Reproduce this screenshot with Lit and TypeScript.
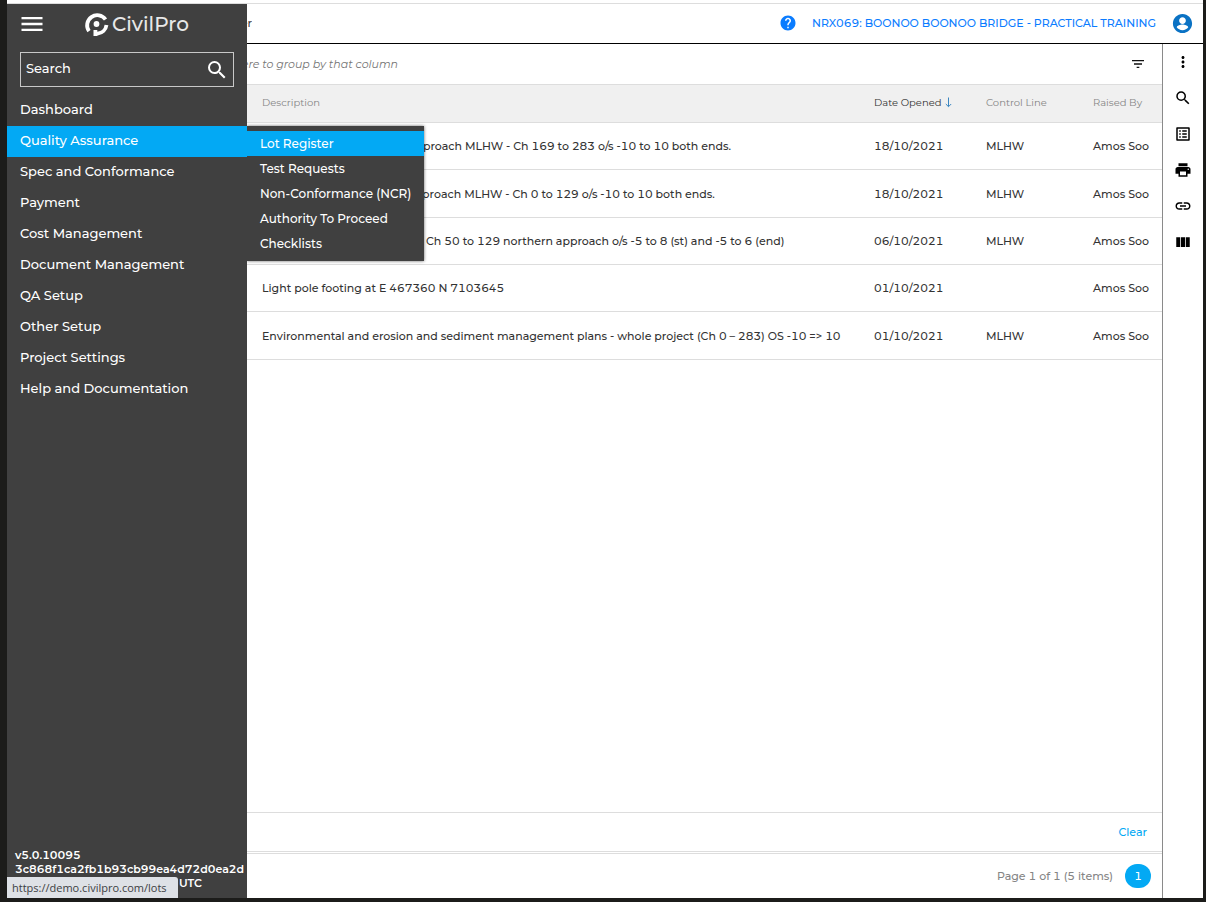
import { LitElement, html, css, svg, nothing } from "lit";
import { customElement, property } from "lit/decorators.js";

const ICONS: Record<string, string> = {
  menu: "M3 18h18v-2H3v2zm0-5h18v-2H3v2zm0-7v2h18V6H3z",
  search:
    "M15.5 14h-.79l-.28-.27A6.47 6.47 0 0 0 16 9.5 6.5 6.5 0 1 0 9.5 16c1.61 0 3.09-.59 4.23-1.57l.27.28v.79l5 4.99L20.49 19l-4.99-5zm-6 0C7.01 14 5 11.99 5 9.5S7.01 5 9.5 5 14 7.01 14 9.5 11.99 14 9.5 14z",
  help: "M12 2C6.48 2 2 6.48 2 12s4.48 10 10 10 10-4.48 10-10S17.52 2 12 2zm1 17h-2v-2h2v2zm2.07-7.75l-.9.92C13.45 12.9 13 13.5 13 15h-2v-.5c0-1.1.45-2.1 1.17-2.83l1.24-1.26c.37-.36.59-.86.59-1.41 0-1.1-.9-2-2-2s-2 .9-2 2H8c0-2.21 1.79-4 4-4s4 1.79 4 4c0 .88-.36 1.68-.93 2.25z",
  account:
    "M12 2C6.48 2 2 6.48 2 12s4.48 10 10 10 10-4.48 10-10S17.52 2 12 2zm0 3.500c1.930 0 3.500 1.570 3.500 3.500s-1.570 3.500-3.500 3.500S8.500 10.930 8.500 9s1.570-3.500 3.500-3.500zM12 19c-2.500 0-4.700-1.200-6-3 .03-1.990 4-3 6-3s5.970 1.010 6 3c-1.300 1.800-3.500 3-6 3z",
  filter: "M10 18h4v-2h-4v2zM3 6v2h18V6H3zm3 7h12v-2H6v2z",
  more: "M12 8c1.100 0 2-.9 2-2s-.9-2-2-2-2 .9-2 2 .9 2 2 2zm0 2c-1.100 0-2 .9-2 2s.9 2 2 2 2-.9 2-2-.9-2-2-2zm0 6c-1.100 0-2 .9-2 2s.9 2 2 2 2-.9 2-2-.9-2-2-2z",
  list: "M19 5v14H5V5h14m1.100-2H3.900c-.5 0-.9.4-.9.9v16.200c0 .4.4.9.9.9h16.200c.4 0 .9-.5.9-.9V3.900c0-.5-.5-.9-.9-.9zM11 7h6v2h-6V7zm0 4h6v2h-6v-2zm0 4h6v2h-6zM7 7h2v2H7zm0 4h2v2H7zm0 4h2v2H7z",
  print:
    "M19 8H5c-1.660 0-3 1.340-3 3v6h4v4h12v-4h4v-6c0-1.660-1.340-3-3-3zm-3 11H8v-5h8v5zm3-7c-.55 0-1-.45-1-1s.45-1 1-1 1 .45 1 1-.45 1-1 1zm-1-9H6v4h12V3z",
  link: "M3.900 12c0-1.710 1.390-3.100 3.100-3.100h4V7H7c-2.760 0-5 2.240-5 5s2.240 5 5 5h4v-1.900H7c-1.710 0-3.100-1.390-3.100-3.100zM8 13h8v-2H8v2zm9-6h-4v1.900h4c1.710 0 3.100 1.390 3.100 3.100s-1.390 3.100-3.100 3.100h-4V17h4c2.760 0 5-2.240 5-5s-2.240-5-5-5z",
  columns: "M3 5.500h5.300v13H3zM9.300 5.500h5.400v13H9.300zM15.700 5.500H21v13h-5.300z",
};

const icon = (name: string, size: number) => html`<svg
  width=${size} height=${size} viewBox="0 0 24 24" fill="currentColor" aria-hidden="true"
>${svg`<path d=${ICONS[name]}></path>`}</svg>`;

const NAV = [
  "Dashboard", "Quality Assurance", "Spec and Conformance", "Payment", "Cost Management",
  "Document Management", "QA Setup", "Other Setup", "Project Settings", "Help and Documentation",
];
const SUBNAV = ["Lot Register", "Test Requests", "Non-Conformance (NCR)", "Authority To Proceed", "Checklists"];

const ROWS = [
  ["Subgrade to the southern approach MLHW - Ch 169 to 283 o/s -10 to 10 both ends.", "18/10/2021", "MLHW", "Amos Soo"],
  ["Subgrade to the northern approach MLHW - Ch 0 to 129 o/s -10 to 10 both ends.", "18/10/2021", "MLHW", "Amos Soo"],
  ["Clearing and grubbing area - Ch 50 to 129 northern approach o/s -5 to 8 (st) and -5 to 6 (end)", "06/10/2021", "MLHW", "Amos Soo"],
  ["Light pole footing at E 467360 N 7103645", "01/10/2021", "", "Amos Soo"],
  ["Environmental and erosion and sediment management plans - whole project (Ch 0 – 283) OS -10 => 10", "01/10/2021", "MLHW", "Amos Soo"],
];

const base = css`
  * { box-sizing: border-box; }
  :host { box-sizing: border-box; }
  svg { display: block; flex: none; }
  a { color: inherit; text-decoration: none; }
  button { display: grid; place-items: center; padding: 0; border: 0; background: none; color: inherit; font: inherit; font-variant-numeric: inherit; cursor: pointer; }
`;

@customElement("side-nav")
export class SideNav extends LitElement {
  @property() active = "Quality Assurance";

  static styles = [base, css`
    :host { display: flex; flex-direction: column; background: #404040; color: #fff; font-size: 13px; font-weight: 500; }
    .brand { display: flex; align-items: center; height: 40px; padding-left: 11px; }
    .logo { display: flex; align-items: center; gap: 3px; margin-left: 38px; font-size: 20px; line-height: 24px; color: #e8e8e8; }
    .search { display: flex; align-items: center; height: 35px; margin: 8px 13px; padding: 0 4px 0 5px; border: 1px solid #c8c8c8; }
    .field { flex: 1; min-width: 0; padding: 0 0 3px; border: 0; outline: 0; background: none; color: inherit; font: inherit; }
    .field::placeholder { color: #fff; opacity: 1; }
    .list { margin: 0; padding: 0; list-style: none; }
    .item { position: relative; }
    .link { display: block; padding: 0 13px 2px; line-height: 29px; }
    .on { background: #03a9f4; }
    .menu { position: absolute; left: 100%; top: 0; z-index: 2; min-width: 177px; margin: 0; padding: 5px 0; list-style: none; background: #404040; font-size: 12px; white-space: nowrap; box-shadow: 0 0 3px rgba(0, 0, 0, 0.6); clip-path: inset(-4px -4px -4px 0); }
    .sub { display: block; padding: 0 13px; line-height: 25px; }
    .build { margin-top: auto; padding: 0 0 8px 8px; overflow: hidden; font-size: 11px; font-weight: 600; line-height: 14px; white-space: nowrap; }
  `];

  render() {
    return html`
      <div class="brand">
        <button aria-label="Menu">${icon("menu", 28)}</button>
        <div class="logo">
          <svg width="25" height="26" viewBox="0 0 25 26" fill="none" stroke="#fff" stroke-width="3.800">
            <path d="M5 20.200A10 10 0 1 1 21.500 8.500"></path>
            <path d="M22.500 14A10 10 0 0 1 13.500 22.600H11M11.400 19V25"></path>
            <circle cx="12.500" cy="13" r="2.900" fill="#fff" stroke="none"></circle>
          </svg>
          <span>CivilPro</span>
        </div>
      </div>
      <div class="search">
        <input class="field" type="text" aria-label="Search" placeholder="Search" />
        <button aria-label="Run search">${icon("search", 24)}</button>
      </div>
      <ul class="list">
        ${NAV.map((n) => html`<li class="item">
          <a class="link ${n === this.active ? "on" : ""}" href="#">${n}</a>
          ${n === this.active
            ? html`<ul class="menu">
                ${SUBNAV.map((s, i) => html`<li><a class="sub ${i === 0 ? "on" : ""}" href="#">${s}</a></li>`)}
              </ul>`
            : nothing}
        </li>`)}
      </ul>
      <div class="build">
        <div>v5.0.10095</div>
        <div>3c868f1ca2fb1b93cb99ea4d72d0ea2d</div>
        <div>Built Thu 28/10/2021 06:27 UTC</div>
      </div>
    `;
  }
}

@customElement("lot-grid")
export class LotGrid extends LitElement {
  static styles = [base, css`
    :host { display: flex; flex-direction: column; min-width: 0; background: #fff; font-size: 11px; font-weight: 500; color: #333; }
    .group { display: flex; align-items: center; justify-content: space-between; height: 41px; padding-right: 16px; border-bottom: 1px solid #ddd; color: #757575; font-style: italic; font-weight: 400; }
    .hint { display: flex; justify-content: flex-end; width: 151px; overflow: hidden; white-space: nowrap; }
    .filter { color: #111; }
    .table { width: 100%; table-layout: fixed; border-collapse: separate; border-spacing: 0; }
    .date { width: 112px; }
    .line { width: 107px; }
    .by { width: 81px; }
    .th { height: 38px; padding: 0 0 2px 12px; border-bottom: 1px solid #ddd; background: #f0f0f0; font-size: 10px; font-weight: 400; text-align: left; color: #858585; white-space: nowrap; }
    .th:first-child, .td:first-child { padding-left: 15px; }
    .sorted { color: #333; }
    .arrow { display: inline-block; margin-left: 4px; vertical-align: -2px; color: #3a86c0; }
    .td { height: 47px; padding: 0 0 1px 12px; border-bottom: 1px solid #ddd; white-space: nowrap; }
    .row:nth-child(3n + 2) .td { height: 48px; padding-bottom: 0; }
    .clear { display: flex; align-items: center; justify-content: flex-end; height: 40px; margin-top: auto; padding-right: 15px; border-top: 1px solid #ddd; border-bottom: 1px solid #ddd; color: #03a9f4; }
    .pager { display: flex; align-items: center; justify-content: flex-end; gap: 12px; height: 45px; margin-top: 1px; padding-right: 11px; border-top: 1px solid #ddd; color: #858585; }
    .page { width: 26px; height: 24px; border-radius: 12px; background: #03a9f4; color: #fff; }
  `];

  render() {
    return html`
      <div class="group">
        <div class="hint">Drag a column header here to group by that column</div>
        <button class="filter" aria-label="Filter">${icon("filter", 16)}</button>
      </div>
      <table class="table">
        <colgroup><col /><col class="date" /><col class="line" /><col class="by" /></colgroup>
        <thead>
          <tr>
            <th class="th">Description</th>
            <th class="th sorted">Date Opened<svg class="arrow" width="7" height="11" viewBox="0 0 7 11" fill="none" stroke="currentColor" aria-hidden="true">
              <path d="M3.500 0.500V9.500M0.800 7L3.500 9.700L6.200 7"></path>
            </svg></th>
            <th class="th">Control Line</th>
            <th class="th">Raised By</th>
          </tr>
        </thead>
        <tbody>
          ${ROWS.map((r) => html`<tr class="row">${r.map((c) => html`<td class="td">${c}</td>`)}</tr>`)}
        </tbody>
      </table>
      <div class="clear"><button>Clear</button></div>
      <div class="pager"><span>Page 1 of 1 (5 items)</span><button class="page">1</button></div>
    `;
  }
}

@customElement("app-root")
export class AppRoot extends LitElement {
  static styles = [base, css`
    :host { display: block; height: 100vh; padding: 0 3px 4px 7px; overflow: hidden; background: #1c1c1a; font-family: Montserrat, Inter, sans-serif; font-variant-numeric: tabular-nums; }
    .window { display: flex; flex-direction: column; height: 100%; position: relative; background: #fff; }
    .strip { flex: none; height: 4px; border-bottom: 1px solid #ddd; }
    .app { display: grid; grid-template-columns: 240px minmax(0, 1fr); flex: 1; min-height: 0; }
    .page { display: flex; flex-direction: column; min-width: 0; }
    .top { display: flex; align-items: center; height: 40px; padding: 0 9px 1px 0; border-bottom: 1px solid #000; font-size: 11px; font-weight: 500; color: #0a7cff; }
    .title { display: flex; justify-content: flex-end; width: 5px; margin-right: auto; overflow: hidden; white-space: nowrap; color: #444; }
    .project { margin: 0 15px; }
    .user { color: #0a72c4; }
    .body { display: grid; grid-template-columns: minmax(0, 1fr) 41px; flex: 1; }
    .tools { display: flex; flex-direction: column; align-items: center; gap: 18px; padding-top: 9px; border-left: 1px solid #8a8a8a; color: #000; }
    .status { position: absolute; left: 0; bottom: 0; z-index: 3; height: 21px; padding: 0 11px 0 5px; border-radius: 0 3px 0 0; background: #dee1e6; color: #3c4043; font: 11px/21px "Open Sans", "Noto Sans", sans-serif; }
  `];

  render() {
    return html`
      <div class="window">
        <div class="strip"></div>
        <div class="app">
          <side-nav></side-nav>
          <div class="page">
            <header class="top">
              <span class="title">Lot Register</span>
              <button aria-label="Help">${icon("help", 18)}</button>
              <a class="project" href="#">NRX069: BOONOO BOONOO BRIDGE - PRACTICAL TRAINING</a>
              <button class="user" aria-label="Account">${icon("account", 23)}</button>
            </header>
            <div class="body">
              <lot-grid></lot-grid>
              <nav class="tools" aria-label="Tools">
                ${["more", "search", "list", "print", "link", "columns"].map(
                  (n) => html`<button aria-label=${n}>${icon(n, 18)}</button>`)}
              </nav>
            </div>
          </div>
        </div>
        <div class="status">https://demo.civilpro.com/lots</div>
      </div>
    `;
  }
}
